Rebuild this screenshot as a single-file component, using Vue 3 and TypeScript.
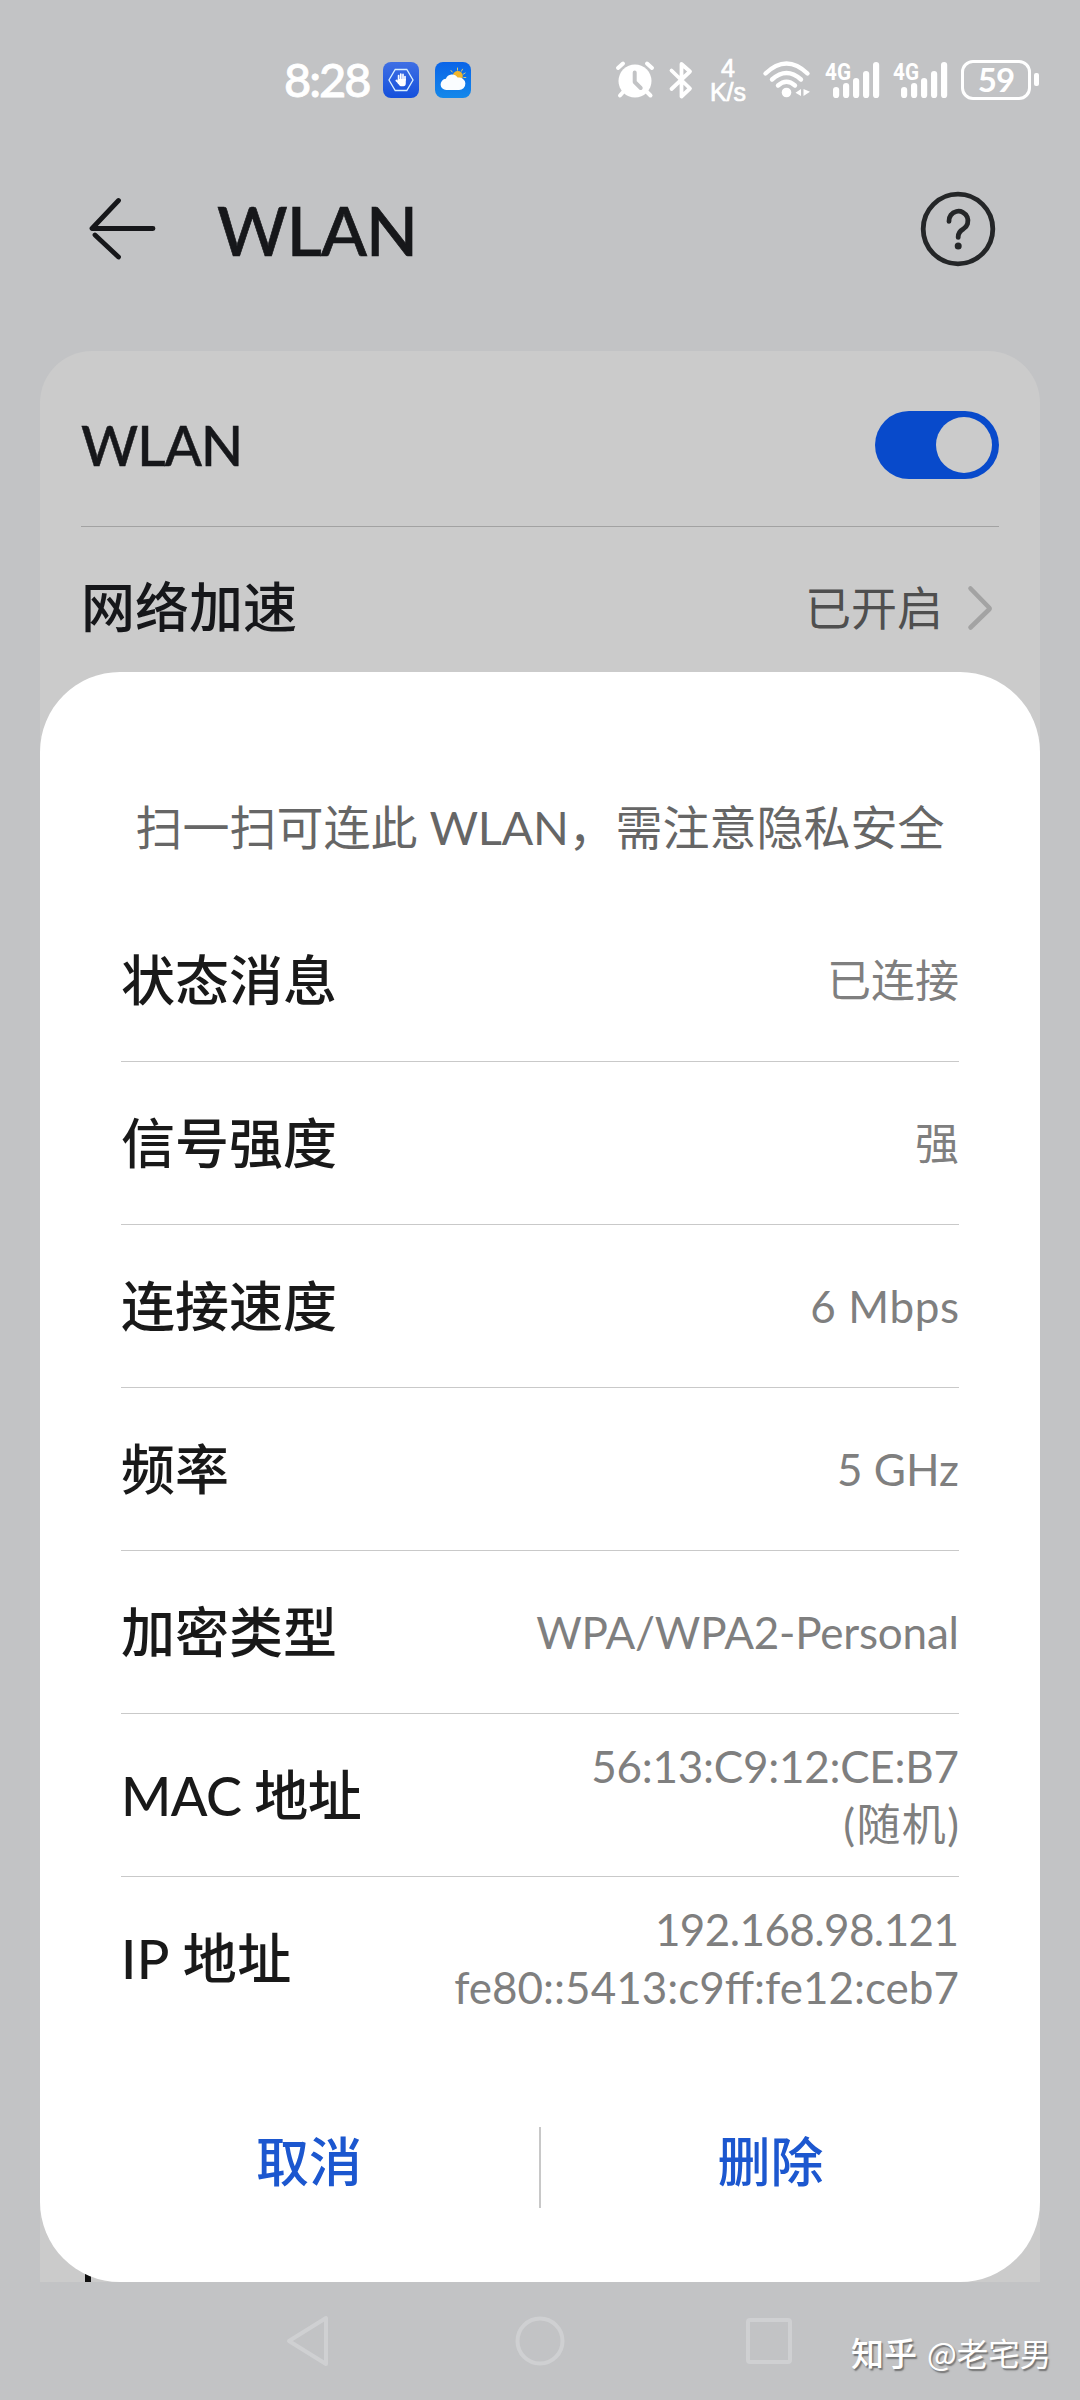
<script setup lang="ts">
interface Detail {
  label: string
  spacing: number
  lines: { text: string; spacing: number }[]
}

const details: Detail[] = [
  { label: '状态消息', spacing: 0, lines: [{ text: '已连接', spacing: 0 }] },
  { label: '信号强度', spacing: 0, lines: [{ text: '强', spacing: 0 }] },
  { label: '连接速度', spacing: 0, lines: [{ text: '6 Mbps', spacing: 0.6 }] },
  { label: '频率', spacing: 0, lines: [{ text: '5 GHz', spacing: 0 }] },
  { label: '加密类型', spacing: 0, lines: [{ text: 'WPA/WPA2-Personal', spacing: -0.2 }] },
  {
    label: 'MAC 地址',
    spacing: -0.6,
    lines: [
      { text: '56:13:C9:12:CE:B7', spacing: -0.25 },
      { text: '(随机)', spacing: 1.4 },
    ],
  },
  {
    label: 'IP 地址',
    spacing: 0.5,
    lines: [
      { text: '192.168.98.121', spacing: -0.6 },
      { text: 'fe80::5413:c9ff:fe12:ceb7', spacing: 0 },
    ],
  },
]

const bars = [
  { x: 8, h: 11 },
  { x: 18, h: 15 },
  { x: 28, h: 20 },
  { x: 38, h: 27 },
  { x: 48, h: 36 },
]
</script>

<template>
  <div class="screen">
    <header class="status">
      <span class="time">8:28</span>
      <svg class="app-a" width="36" height="36" viewBox="0 0 36 36">
        <defs>
          <linearGradient id="ga" x1="0" y1="0" x2="0" y2="1">
            <stop offset="0" stop-color="#3f6fe4" />
            <stop offset="1" stop-color="#1450dc" />
          </linearGradient>
        </defs>
        <rect width="36" height="36" rx="8" fill="url(#ga)" />
        <path d="M12.200 7.500h11.600L30 18l-6.200 10.500H12.200L6 18z" fill="none" stroke="#d9f0ff" stroke-width="1.300" />
        <g stroke="#fff" stroke-width="1.700" stroke-linecap="round" fill="none">
          <path d="M15.600 18v-4.500M17.800 18v-6M20 18v-5.600M22 18v-3.500M15.500 20.500l-2.200-2" />
        </g>
        <path d="M14.800 17h8v4q0 3.200-2.400 3.200h-2.400q-1.300 0-3.200-3z" fill="#fff" />
      </svg>
      <svg class="app-b" width="36" height="36" viewBox="0 0 36 36">
        <defs>
          <linearGradient id="gb" x1="0" y1="0" x2="0" y2="1">
            <stop offset="0" stop-color="#0a64e8" />
            <stop offset="1" stop-color="#1488ea" />
          </linearGradient>
        </defs>
        <rect width="36" height="36" rx="8" fill="url(#gb)" />
        <g stroke="#d8c878" stroke-width="1" stroke-linecap="round">
          <path d="M22.500 6v2.200M27.500 7.200l-1 2M16 8.500l1.200 1.500M30.200 11l-1.800 1.100M28.800 15.500h2" />
        </g>
        <circle cx="22.800" cy="14" r="5" fill="#f2b62c" />
        <path d="M11.500 28a5.600 5.600 0 0 1-.6-11.200A6.600 6.600 0 0 1 22.600 15.600 6.300 6.300 0 1 1 23.500 28z" fill="#fafdff" />
      </svg>

      <div class="right">
        <svg width="40" height="38" viewBox="0 0 40 38">
          <g stroke="#fff" stroke-width="4" stroke-linecap="round">
            <path d="M3 7l5-4.500M32 2.500l5 4.500M9 30l-4 4.500M31 30l4.500 4.500" />
          </g>
          <circle cx="20" cy="20" r="16.500" fill="#fff" />
          <path d="M19.700 11.500v9.500l6 6" fill="none" stroke="#c2c3c5" stroke-width="4" stroke-linecap="round" stroke-linejoin="round" />
        </svg>
        <svg class="bt" width="26" height="38" viewBox="0 0 26 38">
          <path d="M3.500 9.500L22 27.500l-8.500 8V3L22 10.500 3.500 28" fill="none" stroke="#fff" stroke-width="3.800" stroke-linecap="round" stroke-linejoin="round" />
        </svg>
        <div class="speed"><span>4</span><span>K/s</span></div>
        <svg class="wifi" width="48" height="38" viewBox="0 0 48 38">
          <g fill="none" stroke="#fff" stroke-width="4.400" stroke-linecap="round">
            <path d="M2.500 12.500q21-20 42 0M9 18.500q14.500-13 29 0M15 24.500q8.500-7.500 17 0" />
          </g>
          <circle cx="23.500" cy="31.500" r="4.800" fill="#fff" />
          <path d="M38 28v7l-5.500-3.300zM40.500 28v7l6.500-4.200z" fill="#fff" />
        </svg>
        <svg v-for="n in 2" :key="n" :class="'sig' + n" width="56" height="38" viewBox="0 0 56 38">
          <text class="net" x="0" y="18.500" textLength="26" lengthAdjust="spacingAndGlyphs">4G</text>
          <rect v-for="b in bars" :key="b.x" :x="b.x" :y="37 - b.h" width="6.200" :height="b.h" rx="3.100" fill="#fff" />
        </svg>
        <div class="battery"><span>59</span></div>
        <i class="tip"></i>
      </div>
    </header>

    <div class="titlebar">
      <svg width="68" height="64" viewBox="0 0 68 64">
        <path d="M30.500 3.500L4 31.500h61M7 38L30.500 60" fill="none" stroke="#16171a" stroke-width="4.800" stroke-linecap="round" stroke-linejoin="round" />
      </svg>
      <h1>WLAN</h1>
      <svg class="help" width="76" height="76" viewBox="0 0 76 76">
        <circle cx="38" cy="38" r="34.800" fill="none" stroke="#242628" stroke-width="4.800" />
        <path d="M29 30.300a9.500 9.500 0 1 1 14.500 7.500q-5.300 3-5.300 8v.6" fill="none" stroke="#242628" stroke-width="4.800" stroke-linecap="round" />
        <circle cx="38.200" cy="55" r="3.500" fill="#242628" />
      </svg>
    </div>

    <main class="card">
      <div class="setting">
        <span class="name wlan">WLAN</span>
        <span class="switch"><i></i></span>
      </div>
      <div class="setting">
        <span class="name">网络加速</span>
        <span class="state">已开启</span>
        <svg width="26" height="46" viewBox="0 0 26 46">
          <path d="M3.500 3.500L22 22.500q1 1 0 2L3.500 42.500" fill="none" stroke="#a3a3a3" stroke-width="4.600" stroke-linecap="round" />
        </svg>
      </div>
      <i class="peek"></i>
    </main>

    <nav class="nav">
      <svg width="46" height="54" viewBox="0 0 46 54">
        <path d="M41 4v46L4 27z" fill="none" stroke="#cfd0d2" stroke-width="4" stroke-linejoin="round" />
      </svg>
      <svg width="54" height="54" viewBox="0 0 54 54">
        <circle cx="27" cy="27" r="22.500" fill="none" stroke="#cfd0d2" stroke-width="4" />
      </svg>
      <svg width="50" height="50" viewBox="0 0 50 50">
        <rect x="4" y="4" width="42" height="42" rx="2" fill="none" stroke="#cfd0d2" stroke-width="4" />
      </svg>
      <div class="mark"><b>知乎</b><span>@老宅男</span></div>
    </nav>

    <section class="dialog">
      <p class="hint">扫一扫可连此 <span>WLAN</span>，需注意隐私安全</p>
      <ul>
        <li v-for="d in details" :key="d.label">
          <span class="label" :style="{ letterSpacing: d.spacing + 'px' }">{{ d.label }}</span>
          <span class="value">
            <span v-for="l in d.lines" :key="l.text" :style="{ letterSpacing: l.spacing ? l.spacing + 'px' : 'normal', marginRight: -l.spacing + 'px' }">{{ l.text }}</span>
          </span>
        </li>
      </ul>
      <div class="actions">
        <button>取消</button>
        <i></i>
        <button>删除</button>
      </div>
    </section>
  </div>
</template>

<style>
body {
  margin: 0;
  background: #c2c3c5;
}
</style>

<style scoped>
.screen {
  position: relative;
  width: 1080px;
  height: 2400px;
  overflow: hidden;
  display: flex;
  flex-direction: column;
  background: #c2c3c5;
  font-family: Lato, "Noto Sans CJK SC", sans-serif;
  color: #16171a;
}
svg {
  display: block;
  flex: none;
  overflow: visible;
}
.status {
  box-sizing: border-box;
  height: 159px;
  flex: none;
  display: flex;
  align-items: center;
  padding-left: 284px;
  color: #fff;
}
.time {
  width: 99px;
  font-size: 47px;
  line-height: 58px;
  padding-bottom: 2px;
  font-weight: 500;
  letter-spacing: -2px;
  -webkit-text-stroke: 0.8px #fff;
}
.app-b {
  margin-left: 16px;
}
.right {
  display: flex;
  align-items: center;
  margin-left: 144px;
}
.bt {
  margin-left: 13px;
}
.speed {
  width: 40px;
  margin-left: 14px;
  display: flex;
  flex-direction: column;
  align-items: center;
  font: 25px/24px "Liberation Sans", sans-serif;
  -webkit-text-stroke: 0.7px #fff;
}
.wifi {
  margin-left: 15px;
}
.sig1 {
  margin-left: 14px;
}
.sig2 {
  margin-left: 12px;
}
.net {
  font: 700 24px Roboto, sans-serif;
  fill: #fff;
}
.battery {
  box-sizing: border-box;
  width: 70px;
  height: 40px;
  margin-left: 12px;
  border: 3.6px solid #fff;
  border-radius: 12px;
  display: flex;
  align-items: center;
  justify-content: center;
}
.battery span {
  font-size: 33px;
  line-height: 32px;
  padding-bottom: 1px;
  letter-spacing: -1px;
  font-weight: 700;
}
.tip {
  width: 5px;
  height: 13px;
  margin-left: 3px;
  border-radius: 2px;
  background: #fff;
}
.titlebar {
  height: 140px;
  flex: none;
  display: flex;
  align-items: center;
  padding: 0 84px 0 88px;
}
h1 {
  flex: 1;
  margin: 2px 0 0 61px;
  font-size: 68px;
  line-height: 80px;
  font-weight: 500;
  letter-spacing: -1px;
  -webkit-text-stroke: 0.7px #16171a;
}
.card {
  position: relative;
  box-sizing: border-box;
  height: 1931px;
  flex: none;
  margin: 52px 40px 0;
  padding: 12px 41px 0;
  border-radius: 52px 52px 0 0;
  background: #cbcbcb;
}
.setting {
  height: 163px;
  display: flex;
  align-items: center;
}
.setting + .setting {
  box-sizing: border-box;
  border-top: 1px solid #a2a2a2;
}
.name {
  flex: 1;
  font-size: 54px;
  line-height: 70px;
  font-weight: 500;
}
.wlan {
  font-size: 55px;
  letter-spacing: -1px;
  -webkit-text-stroke: 0.5px #16171a;
}
.switch {
  box-sizing: border-box;
  width: 124px;
  height: 68px;
  padding: 6px 7px;
  border-radius: 34px;
  background: #084acb;
  display: flex;
  justify-content: flex-end;
}
.switch i {
  width: 56px;
  height: 56px;
  border-radius: 50%;
  background: #cbcbcb;
}
.state {
  font-size: 46px;
  line-height: 60px;
  color: #4f4f4f;
  margin-right: 24px;
}
.setting svg {
  margin-right: 6px;
}
.peek {
  position: absolute;
  left: 45px;
  bottom: 0;
  width: 6px;
  height: 8px;
  background: #111;
}
.nav {
  position: relative;
  height: 118px;
  flex: none;
  display: flex;
  align-items: center;
}
.nav svg:nth-child(1) {
  margin-left: 285px;
}
.nav svg:nth-child(2) {
  margin-left: 182px;
}
.nav svg:nth-child(3) {
  margin-left: 177px;
}
.mark {
  display: flex;
  gap: 10px;
  margin: 22px 0 0 57px;
  font: 31.500px/40px "Noto Sans CJK SC", sans-serif;
  color: #fff;
  white-space: nowrap;
  text-shadow: 1.500px 1.500px 1.500px #707070;
}
.mark b {
  font-weight: 500;
  font-size: 33px;
}
.dialog {
  position: absolute;
  left: 40px;
  top: 672px;
  box-sizing: border-box;
  width: 1000px;
  height: 1610px;
  padding: 120px 81px 0;
  border-radius: 80px;
  background: #fff;
}
.hint {
  margin: 0 0 37px;
  text-align: center;
  font-size: 47px;
  line-height: 70px;
  color: #666;
  white-space: nowrap;
}
.hint span {
  letter-spacing: -0.4px;
}
ul {
  list-style: none;
  margin: 0;
  padding: 0;
}
li {
  box-sizing: border-box;
  height: 163px;
  display: flex;
  align-items: center;
  justify-content: space-between;
  border-bottom: 1px solid #c9c9c9;
}
li:last-child {
  border-bottom-color: transparent;
}
.label {
  font-size: 54px;
  line-height: 70px;
  font-weight: 500;
  padding-top: 2px;
  color: #191919;
}
.value {
  display: flex;
  flex-direction: column;
  align-items: flex-end;
  font-size: 44px;
  line-height: 58px;
  color: #7f7f7f;
}
.actions {
  height: 81px;
  margin-top: 87px;
  display: flex;
  align-items: center;
}
.actions i {
  flex: none;
  width: 2px;
  height: 81px;
  background: #c8c8c8;
}
button {
  box-sizing: border-box;
  width: 418px;
  flex: none;
  border: 0;
  padding: 0 0 12px;
  background: none;
  font: 500 53px/70px Lato, "Noto Sans CJK SC", sans-serif;
  color: #1c57cf;
}
button:first-child {
  padding-right: 42px;
}
button:last-child {
  padding-left: 41px;
}
</style>
